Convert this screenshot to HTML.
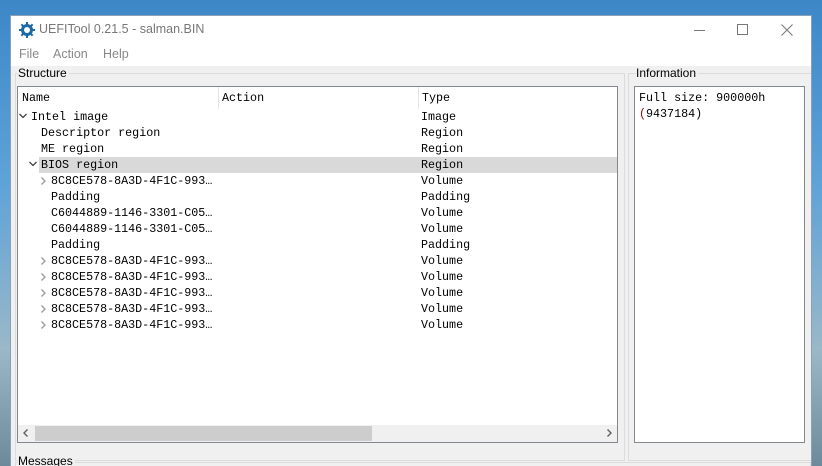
<!DOCTYPE html>
<html><head><style>
*{margin:0;padding:0;box-sizing:border-box}
html,body{width:822px;height:466px;overflow:hidden}
body{position:relative;background:linear-gradient(180deg,#3d87c8 0%,#5fa3d8 40%,#9ab8c8 75%,#6d8a9a 100%);font-family:"Liberation Sans",sans-serif}
.win{position:absolute;left:10px;top:15px;width:802px;height:451px;background:#f0f0f0;border:1px solid #8aa0b8;border-bottom:none;overflow:hidden}
.title{position:absolute;left:0;top:0;width:800px;height:50px;background:#fff}
.t{position:absolute;font-size:12.5px;color:#7a7a7a}
.mono{font-family:"Liberation Mono",monospace;font-size:11.7px;color:#000;position:absolute;white-space:pre;line-height:16px}
.lbl{position:absolute;font-size:12px;color:#000}
.box{position:absolute;background:#fff;border:1px solid #828790}
.grp{position:absolute;border:1px solid #dcdcdc}
.chev{position:absolute;width:8px;height:10px}
</style></head><body>
<div class="win">
<div class="title">
<svg style="position:absolute;left:8px;top:6px" width="16" height="16" viewBox="0 0 16 16"><circle cx="8" cy="8" r="6" fill="#1e6aa8"/><g fill="#1e6aa8"><rect x="7" y="0" width="2" height="16"/><rect x="0" y="7" width="16" height="2"/><rect x="7" y="0" width="2" height="16" transform="rotate(45 8 8)"/><rect x="7" y="0" width="2" height="16" transform="rotate(-45 8 8)"/></g><circle cx="8" cy="8" r="3" fill="#fff"/></svg>
<div class="t" style="left:28px;top:6px;color:#777">UEFITool 0.21.5 - salman.BIN</div>
<div style="position:absolute;left:683px;top:14px;width:11px;height:1px;background:#777"></div>
<div style="position:absolute;left:726px;top:8px;width:11px;height:11px;border:1px solid #777"></div>
<svg style="position:absolute;left:770px;top:8px" width="12" height="12" viewBox="0 0 12 12"><path d="M0.5 0.5L11.5 11.5M11.5 0.5L0.5 11.5" stroke="#777" stroke-width="1"/></svg>
<div class="t" style="left:8px;top:31px;color:#888">File</div>
<div class="t" style="left:42px;top:31px;color:#888">Action</div>
<div class="t" style="left:92px;top:31px;color:#888">Help</div>
</div>
<div class="grp" style="left:4px;top:57px;width:610px;height:388px"></div>
<div class="lbl" style="left:7px;top:50px;background:#f0f0f0;padding-right:2px">Structure</div>
<div class="grp" style="left:617px;top:57px;width:184px;height:388px"></div>
<div class="lbl" style="left:625px;top:50px;background:#f0f0f0;padding-right:2px">Information</div>
<div class="grp" style="left:4px;top:446px;width:796px;height:20px"></div>
<div class="lbl" style="left:7px;top:438px;background:#f0f0f0;padding-right:2px">Messages</div>

<div class="box" style="left:6px;top:70px;width:601px;height:357px;overflow:hidden">
<div style="position:absolute;left:200px;top:0;width:1px;height:22px;background:#e5e5e5"></div>
<div style="position:absolute;left:400px;top:0;width:1px;height:22px;background:#e5e5e5"></div>
<div style="position:absolute;left:21px;top:70px;width:580px;height:16px;background:#d9d9d9"></div>
<div class="mono" style="left:4px;top:3px">Name</div>
<div class="mono" style="left:204px;top:3px">Action</div>
<div class="mono" style="left:404px;top:3px">Type</div>
<svg class="chev" style="left:1px;top:24px" viewBox="0 0 8 10"><path d="M0.5 3L4 6.5L7.5 3" stroke="#444" stroke-width="1.3" fill="none"/></svg>
<div class="mono" style="left:13px;top:22px">Intel image</div>
<div class="mono" style="left:23px;top:38px">Descriptor region</div>
<div class="mono" style="left:23px;top:54px">ME region</div>
<svg class="chev" style="left:11px;top:72px" viewBox="0 0 8 10"><path d="M0.5 3L4 6.5L7.5 3" stroke="#444" stroke-width="1.3" fill="none"/></svg>
<div class="mono" style="left:23px;top:70px">BIOS region</div>
<div class="mono" style="left:33px;top:86px">8C8CE578-8A3D-4F1C-993…</div>
<div class="mono" style="left:33px;top:102px">Padding</div>
<div class="mono" style="left:33px;top:118px">C6044889-1146-3301-C05…</div>
<div class="mono" style="left:33px;top:134px">C6044889-1146-3301-C05…</div>
<div class="mono" style="left:33px;top:150px">Padding</div>
<div class="mono" style="left:33px;top:166px">8C8CE578-8A3D-4F1C-993…</div>
<div class="mono" style="left:33px;top:182px">8C8CE578-8A3D-4F1C-993…</div>
<div class="mono" style="left:33px;top:198px">8C8CE578-8A3D-4F1C-993…</div>
<div class="mono" style="left:33px;top:214px">8C8CE578-8A3D-4F1C-993…</div>
<div class="mono" style="left:33px;top:230px">8C8CE578-8A3D-4F1C-993…</div>
<svg class="chev" style="left:21px;top:89px" viewBox="0 0 8 10"><path d="M2.5 1.5L6 5L2.5 8.5" stroke="#999" stroke-width="1.3" fill="none"/></svg>
<svg class="chev" style="left:21px;top:169px" viewBox="0 0 8 10"><path d="M2.5 1.5L6 5L2.5 8.5" stroke="#999" stroke-width="1.3" fill="none"/></svg>
<svg class="chev" style="left:21px;top:185px" viewBox="0 0 8 10"><path d="M2.5 1.5L6 5L2.5 8.5" stroke="#999" stroke-width="1.3" fill="none"/></svg>
<svg class="chev" style="left:21px;top:201px" viewBox="0 0 8 10"><path d="M2.5 1.5L6 5L2.5 8.5" stroke="#999" stroke-width="1.3" fill="none"/></svg>
<svg class="chev" style="left:21px;top:217px" viewBox="0 0 8 10"><path d="M2.5 1.5L6 5L2.5 8.5" stroke="#999" stroke-width="1.3" fill="none"/></svg>
<svg class="chev" style="left:21px;top:233px" viewBox="0 0 8 10"><path d="M2.5 1.5L6 5L2.5 8.5" stroke="#999" stroke-width="1.3" fill="none"/></svg>
<div class="mono" style="left:403px;top:22px">Image</div>
<div class="mono" style="left:403px;top:38px">Region</div>
<div class="mono" style="left:403px;top:54px">Region</div>
<div class="mono" style="left:403px;top:70px">Region</div>
<div class="mono" style="left:403px;top:86px">Volume</div>
<div class="mono" style="left:403px;top:102px">Padding</div>
<div class="mono" style="left:403px;top:118px">Volume</div>
<div class="mono" style="left:403px;top:134px">Volume</div>
<div class="mono" style="left:403px;top:150px">Padding</div>
<div class="mono" style="left:403px;top:166px">Volume</div>
<div class="mono" style="left:403px;top:182px">Volume</div>
<div class="mono" style="left:403px;top:198px">Volume</div>
<div class="mono" style="left:403px;top:214px">Volume</div>
<div class="mono" style="left:403px;top:230px">Volume</div>
<div style="position:absolute;left:0;top:338px;width:600px;height:17px;background:#f0f0f0"></div>
<div style="position:absolute;left:17px;top:339px;width:337px;height:15px;background:#cdcdcd"></div>
<svg class="chev" style="left:4px;top:341px" viewBox="0 0 8 10"><path d="M5.5 1.5L2 5L5.5 8.5" stroke="#606060" stroke-width="1.4" fill="none"/></svg>
<svg class="chev" style="left:587px;top:341px" viewBox="0 0 8 10"><path d="M2.5 1.5L6 5L2.5 8.5" stroke="#606060" stroke-width="1.4" fill="none"/></svg>
</div>

<div class="box" style="left:623px;top:70px;width:171px;height:357px">
<div class="mono" style="left:4px;top:3px">Full size: 900000h
<span style="color:#a00">(</span>9437184)</div>
</div>
</div>
</body></html>
